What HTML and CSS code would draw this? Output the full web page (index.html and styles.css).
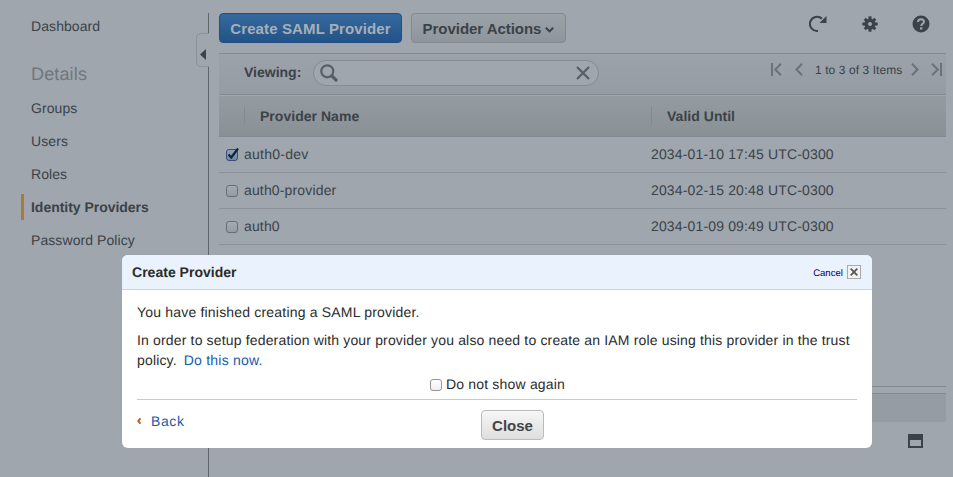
FILE: index.html
```html
<!DOCTYPE html>
<html lang="en">
<head>
<meta charset="utf-8">
<title>Identity Providers</title>
<link rel="stylesheet" href="styles.css">
</head>
<body>
<div class="app">
  <nav class="sidebar">
    <a class="nav dash">Dashboard</a>
    <h2 class="group">Details</h2>
    <a class="nav groups">Groups</a>
    <a class="nav">Users</a>
    <a class="nav">Roles</a>
    <a class="nav active"><span>Identity Providers</span></a>
    <a class="nav policy">Password Policy</a>
  </nav>
  <div class="divider"><span class="line top"></span>
    <svg class="tab" width="13" height="34" viewBox="0 0 13 34"><path d="M13 .5H5.500Q.5 .5 .5 5.500V28.500Q.5 33.500 5.500 33.500H13" fill="none" stroke="#8b9298"/><path d="M10 16v11L4 21.500z" fill="#3b4249"/></svg>
    <span class="line rest"></span></div>
  <main class="main">
    <div class="actions">
      <button class="btn primary"><span>Create SAML Provider</span></button>
      <button class="btn secondary"><span>Provider Actions</span><svg width="9" height="6" viewBox="0 0 9 6"><path d="M.8 .8 4.500 4.400 8.200 .8" fill="none" stroke="#3b4249" stroke-width="2"/></svg></button>
      <div class="tools">
        <svg width="18" height="18" viewBox="0 0 18 18"><path d="M9 15.900A7.100 7.100 0 1 1 13 3.800" fill="none" stroke="#3b4249" stroke-width="2"/><path d="M17.500 1v7H10.500z" fill="#3b4249"/></svg>
        <svg width="16" height="16" viewBox="-8 -8 16 16" fill="#3b4249"><g id="teeth"><rect x="-1.500" y="-7.700" width="3" height="15.400"/><rect x="-7.700" y="-1.500" width="15.400" height="3"/></g><use href="#teeth" transform="rotate(45) scale(.97)"/><circle r="5.600"/><circle r="2" fill="#9fa6ad"/></svg>
        <svg width="18" height="18" viewBox="0 0 18 18"><circle cx="9" cy="9" r="8.500" fill="#3b4249"/><path d="M6 7Q6 4.300 9 4.300T12 6.800Q12 8 10.500 8.800Q9.300 9.500 9.300 11" fill="none" stroke="#9fa6ad" stroke-width="2"/><rect x="8" y="12.300" width="2.400" height="2.200" fill="#9fa6ad"/></svg>
      </div>
    </div>
    <div class="filter">
      <span class="viewing">Viewing:</span>
      <div class="search">
        <svg width="18" height="18" viewBox="0 0 18 18" fill="none" stroke="#575e65"><circle cx="7.300" cy="7.300" r="6" stroke-width="2.200"/><path d="M11.800 11.800 16 16" stroke-width="3.200" stroke-linecap="round"/></svg>
        <svg width="14" height="14" viewBox="0 0 14 14"><path d="M1 1 13 13M13 1 1 13" stroke="#575e65" stroke-width="2.200"/></svg>
      </div>
      <div class="pager">
        <svg width="11" height="13" viewBox="0 0 11 13"><path d="M1 0V13M10 .7 4.200 6.500 10 12.300"/></svg>
        <svg width="8" height="13" viewBox="0 0 8 13"><path d="M7 .7 1.500 6.500 7 12.300"/></svg>
        <span>1 to 3 of 3 Items</span>
        <svg width="8" height="13" viewBox="0 0 8 13"><path d="M1 .7 6.500 6.500 1 12.300"/></svg>
        <svg width="11" height="13" viewBox="0 0 11 13"><path d="M10 0V13M1 .7 6.800 6.500 1 12.300"/></svg>
      </div>
    </div>
    <div class="table">
      <div class="row head"><span class="name">Provider Name</span><span class="until">Valid Until</span></div>
      <div class="row"><span class="box checked"><svg width="16" height="14" viewBox="0 0 16 14"><path d="M3.500 7.500 6.300 10.500 13 1.500" fill="none" stroke="#172334" stroke-width="2.200"/></svg></span><span class="id dev">auth0-dev</span><span class="date">2034-01-10 17:45 UTC-0300</span></div>
      <div class="row"><span class="box"></span><span class="id">auth0-provider</span><span class="date">2034-02-15 20:48 UTC-0300</span></div>
      <div class="row"><span class="box"></span><span class="id">auth0</span><span class="date">2034-01-09 09:49 UTC-0300</span></div>
    </div>
    <div class="space"></div>
    <div class="band"></div>
    <div class="detail"><svg width="15" height="14" viewBox="0 0 15 14"><path d="M0 0H15V14H0zM2 6V12H13V6z" fill="#3b4249" fill-rule="evenodd"/></svg></div>
  </main>
</div>
<section class="modal">
  <header class="modal-head"><h1>Create Provider</h1><a class="cancel">Cancel</a>
    <span class="x"><svg width="8" height="8" viewBox="0 0 8 8"><path d="M.7 .7 7.300 7.300M7.300 .7 .7 7.300" stroke="#555" stroke-width="1.800"/></svg></span></header>
  <div class="modal-body">
    <p class="done">You have finished creating a SAML provider.</p>
    <p class="info"><span class="l1">In order to setup federation with your provider you also need to create an IAM role using this provider in the trust</span><br><span class="l2">policy.</span><a>Do this now.</a></p>
    <label class="again"><span class="box light"></span><span class="t">Do not show again</span></label>
    <footer class="foot">
      <a class="back"><svg width="4" height="6" viewBox="0 0 4 6"><path d="M3.500 .3 1.200 3 3.500 5.700" fill="none" stroke="#c8571c" stroke-width="1.900"/></svg><span>Back</span></a>
      <button class="btn close"><span>Close</span></button>
    </footer>
  </div>
</section>
</body>
</html>
```
FILE: styles.css
```css
* { box-sizing: border-box; }
body {
  margin: 0;
  height: 477px;
  overflow: hidden;
  background: #9fa6ad;
  color: #3b4249;
  font: 14px/20px "Liberation Sans", Arial, sans-serif;
  letter-spacing: .15px;
  text-rendering: geometricPrecision;
}
h1, h2, p { margin: 0; }
span, a, p { white-space: nowrap; }
.app { display: flex; height: 477px; }

.sidebar { width: 196px; padding: 16px 0 0 21px; }
.nav { display: block; height: 20px; padding-left: 10px; margin-bottom: 13px; letter-spacing: .08px; }
.dash { margin-bottom: 28px; }
.group { padding-left: 10px; margin-bottom: 14px; font-size: 18px; line-height: 20px; font-weight: normal; color: #70777e; }
.active { height: 26px; margin: -3px 0 10px; padding-left: 7px; border-left: 3px solid #ad7a35; line-height: 26px; font-weight: bold; letter-spacing: -.03px; }

.divider { display: flex; flex-direction: column; width: 13px; padding-top: 13px; }
.divider svg { display: block; }
.line { width: 1px; margin-left: 12px; background: #5f666d; }
.top { height: 20px; }
.rest { flex: 1; }

.main { display: flex; flex-direction: column; width: 727px; margin-left: 10px; padding-top: 13px; }
.actions { display: flex; height: 40px; }
.btn {
  display: flex; align-items: center; justify-content: center;
  height: 30px; padding: 0; border-radius: 4px;
  font: bold 15px/20px "Liberation Sans", Arial, sans-serif;
  letter-spacing: .12px;
}
.btn span { position: relative; top: 1px; }
.primary { width: 183px; border: 1px solid #204f87; background: linear-gradient(#36699f, #235387); color: #a6afb7; }
.secondary { width: 155px; margin-left: 9px; gap: 4px; border: 1px solid #828a90; background: linear-gradient(#9ba2a9, #8e959b); color: #3b4249; letter-spacing: -.04px; }
.secondary svg { margin-top: 3px; }
.tools { display: flex; align-items: center; height: 21px; margin-left: 243px; }
.tools svg:nth-child(2) { margin-left: 34.5px; }
.tools svg:nth-child(3) { margin-left: 34px; }

.filter { display: flex; height: 42px; border-top: 1px solid #838a91; border-bottom: 1px solid #838a91; background: linear-gradient(#9ba2a9, #959ca3); }
.viewing { width: 94px; padding: 8px 0 0 25px; font-weight: bold; letter-spacing: 0; }
.search { display: flex; justify-content: space-between; align-items: center; width: 286px; height: 26px; margin-top: 6px; padding: 0 8px 0 6px; border: 1px solid #858c93; border-radius: 13px; background: #9fa6ad; }
.pager { display: flex; align-items: center; height: 31px; margin-left: 172px; font-size: 12px; letter-spacing: .08px; }
.pager svg { fill: none; stroke: #6b7279; stroke-width: 2; }
.pager svg:nth-child(2) { margin-left: 13px; }
.pager span { width: 87px; margin: 0 9px 0 12px; }
.pager svg:last-child { margin-left: 12px; }

.row { display: flex; align-items: center; height: 36px; padding-bottom: 2px; border-bottom: 1px solid #8b9299; }
.head { height: 42px; padding: 0; border-top: 1px solid #a2a9ae; border-bottom-color: #838a91; background: linear-gradient(#949ba1, #899096); font-weight: bold; letter-spacing: .03px; }
.head span { height: 18px; line-height: 18px; border-left: 1px solid #838a91; padding-left: 15px; }
.name { width: 407px; margin-left: 25px; }
.box { width: 12px; height: 12px; margin: 2px 6px 0 7px; border: 1px solid #666d74; border-radius: 3px; background: linear-gradient(#a3aab0, #949ba2); }
.checked { border-color: #3d4b76; background: linear-gradient(#8ca5ba, #668ba8); }
.checked svg { display: block; margin: -3px 0 0 -2px; }
.id { width: 407px; }
.dev { letter-spacing: .25px; }
.space { flex: 1; }
.band { height: 36px; border-top: 1px solid #838a91; background: linear-gradient(#9fa6ad 6px, #838a91 6px, #838a91 7px, #959ca3 7px); }
.detail { height: 55px; padding: 12px 0 0 689px; }
.detail svg { display: block; }

.modal { position: absolute; left: 122px; top: 255px; width: 750px; height: 193px; border-radius: 6px; background: #fff; color: #2b2b2b; overflow: hidden; }
.modal-head { display: flex; align-items: center; height: 35px; padding: 0 11px 0 10px; border-bottom: 1px solid #bfd8ee; background: #eaf2fe; }
h1 { flex: 1; font-size: 14px; line-height: 20px; letter-spacing: .02px; }
.modal-head .cancel { margin: 3px 4px 0 0; font-size: 9.5px; color: #000066; letter-spacing: .05px; }
.x { display: flex; align-items: center; justify-content: center; width: 14px; height: 14px; border: 1px solid #aaa; background: #f1f1f1; }
.modal-body { padding: 12px 15px 0; }
.done { letter-spacing: .19px; }
.info { margin-top: 8px; letter-spacing: .16px; }
.info a { margin-left: 7px; letter-spacing: .22px; }
.modal-body a { color: #1a5aaa; }
.again { display: flex; justify-content: center; margin: 4px 0 0 1px; letter-spacing: .19px; }
.light { margin: 5px 4px 0 0; border-color: #949494; background: linear-gradient(#fff, #eee); }
.foot { display: grid; grid-template-columns: 344px 63px; margin-top: 5px; padding-top: 10px; border-top: 1px solid #c9cccb; }
.back { display: flex; align-items: center; gap: 10px; height: 22px; letter-spacing: .6px; }
.close { width: 63px; border: 1px solid #bbb; background: linear-gradient(#f6f6f6, #dedede); color: #444; letter-spacing: 0; }
```
